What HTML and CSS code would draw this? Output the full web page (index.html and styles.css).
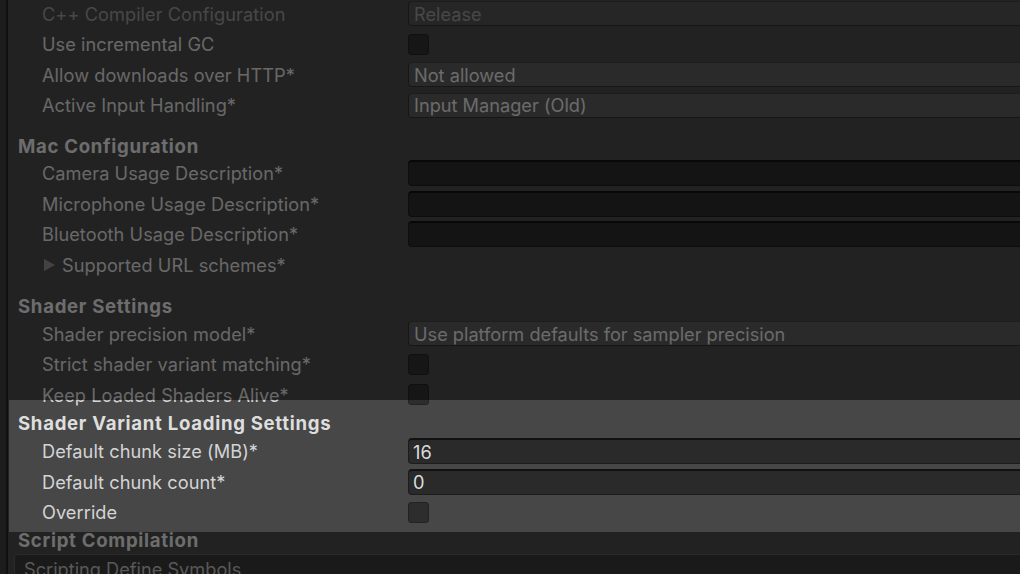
FILE: index.html
```html
<!DOCTYPE html>
<html>
<head>
<meta charset="utf-8">
<link rel="stylesheet" href="styles.css">
</head>
<body>
<div class="inspector">
  <div class="edge"></div>
  <div class="content">
    <div class="row first">
      <div class="label disabled">C++ Compiler Configuration</div>
      <div class="dropdown disabled">Release</div>
    </div>
    <div class="row">
      <div class="label">Use incremental GC</div>
      <div class="checkbox"></div>
    </div>
    <div class="row">
      <div class="label">Allow downloads over HTTP*</div>
      <div class="dropdown">Not allowed</div>
    </div>
    <div class="row">
      <div class="label">Active Input Handling*</div>
      <div class="dropdown">Input Manager (Old)</div>
    </div>

    <div class="header">Mac Configuration</div>
    <div class="row">
      <div class="label">Camera Usage Description*</div>
      <div class="textfield"></div>
    </div>
    <div class="row">
      <div class="label">Microphone Usage Description*</div>
      <div class="textfield"></div>
    </div>
    <div class="row">
      <div class="label">Bluetooth Usage Description*</div>
      <div class="textfield"></div>
    </div>
    <div class="row">
      <div class="label foldout"><span class="tri"></span>Supported URL schemes*</div>
    </div>

    <div class="header wide">Shader Settings</div>
    <div class="row">
      <div class="label">Shader precision model*</div>
      <div class="dropdown">Use platform defaults for sampler precision</div>
    </div>
    <div class="row">
      <div class="label">Strict shader variant matching*</div>
      <div class="checkbox"></div>
    </div>
    <div class="row">
      <div class="label">Keep Loaded Shaders Alive*</div>
      <div class="checkbox"></div>
    </div>

    <div class="header tight">Shader Variant Loading Settings</div>
    <div class="row">
      <div class="label">Default chunk size (MB)*</div>
      <div class="textfield">16</div>
    </div>
    <div class="row">
      <div class="label">Default chunk count*</div>
      <div class="textfield">0</div>
    </div>
    <div class="row">
      <div class="label">Override</div>
      <div class="checkbox"></div>
    </div>

    <div class="header tighter">Script Compilation</div>
    <div class="listbox">Scripting Define Symbols</div>
  </div>
</div>
<div class="spotlight"></div>
</body>
</html>
```
FILE: styles.css
```css
html, body {
  margin: 0;
  padding: 0;
  width: 1020px;
  height: 574px;
  overflow: hidden;
  background: #474747;
}
body {
  font-family: Inter, "Noto Sans", sans-serif;
  font-size: 18.2px;
  color: #d2d2d2;
  position: relative;
}
.inspector {
  display: flex;
  height: 574px;
  overflow: hidden;
}
.edge {
  width: 6px;
  flex: none;
  background: #393939;
  border-right: 2px solid #222222;
}
.content {
  flex: 1;
  min-width: 0;
  padding-left: 10px;
  margin-top: -1.5px;
  display: flex;
  flex-direction: column;
}
.row {
  height: 30.5px;
  flex: none;
  display: flex;
  align-items: center;
  padding-left: 24px;
}
.label {
  width: 366px;
  flex: none;
  white-space: nowrap;
  color: #d4d4d4;
  letter-spacing: 0.05px;
}
.label.disabled {
  color: #929292;
}
.foldout {
  display: flex;
  align-items: center;
}
.tri {
  width: 0;
  height: 0;
  margin-left: 2px;
  margin-right: 7px;
  border-top: 6px solid transparent;
  border-bottom: 6px solid transparent;
  border-left: 11px solid #8a8a8a;
}
.dropdown, .textfield {
  flex: 1;
  margin-right: -30px;
  height: 25px;
  box-sizing: border-box;
  border-radius: 4px;
  padding-left: 5px;
  display: flex;
  align-items: center;
  white-space: nowrap;
}
.dropdown {
  background: #565656;
  border: 1px solid #2e2e2e;
  border-top-color: #3c3c3c;
  color: #dadada;
}
.dropdown.disabled {
  color: #939393;
  background: #4e4e4e;
}
.textfield {
  height: 26px;
  background: #2a2a2a;
  border: 1px solid #1c1c1c;
  border-top: 2px solid #121212;
  color: #dcdcdc;
  padding-left: 4px;
}
.checkbox {
  width: 21px;
  height: 21px;
  box-sizing: border-box;
  border-radius: 3px;
  background: #2d2d2d;
  border: 1px solid #222222;
}
.header {
  flex: none;
  height: 37.5px;
  box-sizing: border-box;
  padding-top: 12.5px;
  line-height: 26px;
  font-size: 18.6px;
  font-weight: 700;
  letter-spacing: 0.7px;
  color: #dedede;
  white-space: nowrap;
}
.header.wide {
  height: 38.5px;
  padding-top: 13px;
}
.header.tight {
  height: 26px;
  padding-top: 0;
}
.header.tighter {
  height: 26.5px;
  padding-top: 0;
  line-height: 25px;
}
.listbox {
  flex: none;
  margin-left: -4px;
  margin-right: -20px;
  height: 40px;
  box-sizing: border-box;
  background: #363636;
  border: 1px solid #565656;
  border-radius: 4px 4px 0 0;
  padding: 2px 0 0 9px;
  line-height: 24px;
  color: #b4b4b4;
  white-space: nowrap;
}
.spotlight {
  position: absolute;
  left: 9px;
  right: 0;
  top: 400px;
  height: 132px;
  box-shadow: 0 0 0 2000px rgba(0, 0, 0, 0.51);
  pointer-events: none;
}
```
